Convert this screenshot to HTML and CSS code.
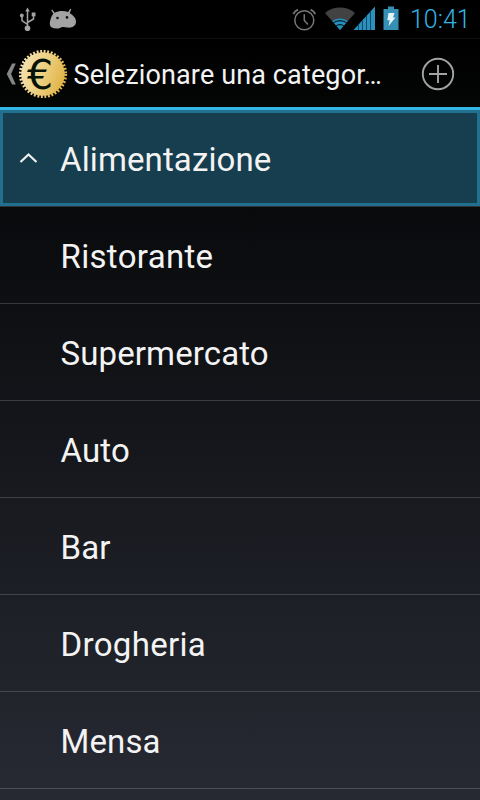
FILE: index.html
```html
<!DOCTYPE html>
<html lang="it">
<head>
<meta charset="utf-8">
<title>Selezionare una categoria</title>
<link rel="stylesheet" href="styles.css">
</head>
<body>
<div class="screen">
  <header class="status">
    <svg class="status-left" width="80" height="38" viewBox="0 0 80 38">
      <g fill="none" stroke="#a3a3a3" stroke-width="1.5">
        <path d="M27.5 10v18M27.5 24.5l-5.5-4v-4M27.5 22.500l6-3.500v-3"/>
      </g>
      <g fill="#a3a3a3">
        <path d="M27.500 7.500l2.300 4h-4.600z"/>
        <circle cx="27.500" cy="28.200" r="2.800"/>
        <circle cx="21.800" cy="15.500" r="1.900"/>
        <path d="M31.700 12.500h3.800v3.800h-3.800z"/>
        <path d="M52.200 9.500l2.500 3.200c4-2.200 9.500-2.200 13.500-.6l2-3.300 1 .5-1.500 4c3.800 2 6.300 5 6.300 8.200 0 4.500-4 6.800-8.500 6.100-2.500-.5-4.700-1.200-6.500-.2-3.200 1.600-6.500 1.500-9 .1-2.700-1.500-2.400-4.500-1.700-7.300.6-2.600 1.500-4.800 3.100-6.500l-2.200-3.600z"/>
      </g>
      <g fill="#111"><circle cx="57.500" cy="18" r="1.300"/><circle cx="67" cy="17.400" r="1.300"/></g>
    </svg>
    <svg class="status-right" width="122" height="38" viewBox="280 0 122 38">
      <g fill="none" stroke="#777" stroke-width="1.500">
        <circle cx="304.300" cy="20.200" r="9.500"/>
        <path d="M304.300 14.200v6.300l3.700 4"/>
        <path d="M293.300 14.200c1-2.200 2.500-3.700 4.700-4.600M315.300 14.200c-1-2.200-2.500-3.700-4.700-4.600" stroke-width="1.800"/>
      </g>
      <path d="M340 30L325 13c8.500-7.300 21.500-7.300 30 0z" fill="#424242"/>
      <path d="M340 30l-7.800-9c4.500-3.500 11.100-3.500 15.600 0z" fill="#258fbd"/>
      <g fill="none" stroke="#000" stroke-width="1"><path d="M333 23.200c4-3.200 10-3.200 14 0M335.500 26.200c2.600-2 6.400-2 9 0"/></g>
      <path d="M353.500 30L375 6.500V30z" fill="#2b90bd"/>
      <path d="M358.500 30v-5M362.500 30V20.500M366.500 30V16M370.500 30V12" stroke="#0d4c69" stroke-width="1"/>
      <path d="M383.500 9h4.500V6.500h6V9h4.500v21h-15z" fill="#368fb4"/>
      <path d="M388.500 13h6l-1.500 4.500h2.500L388.500 26l1.200-5.800h-2.400z" fill="#e4f3f8"/>
    </svg>
    <time class="clock">10:41</time>
  </header>
  <div class="bar">
    <svg class="home" width="68" height="69" viewBox="0 38 68 69">
      <defs><linearGradient id="gold" x1="20" y1="66" x2="66" y2="82" gradientUnits="userSpaceOnUse"><stop offset="0" stop-color="#f4e2b2"/><stop offset=".5" stop-color="#eccf80"/><stop offset="1" stop-color="#dfb03f"/></linearGradient></defs>
      <path d="M15.800 62.500h-3.700L6.700 73l5.400 10.600h3.700L11.100 73z" fill="#858585"/>
      <circle cx="43" cy="73" r="21.800" fill="url(#gold)"/>
      <circle cx="43" cy="73" r="22.600" fill="none" stroke="url(#gold)" stroke-width="3" stroke-dasharray="1.900 1.650"/>
      <text class="euro" x="27" y="88">€</text>
    </svg>
    <h1 class="title">Selezionare una categor…</h1>
    <svg class="add" width="36" height="36" viewBox="0 0 36 36" fill="none" stroke="#a3a3a3">
      <circle cx="18" cy="18" r="15.200" stroke-width="1.900"/>
      <path d="M18 9v18M9 18h18" stroke-width="1.900"/>
    </svg>
  </div>
  <ul class="list">
    <li class="row selected">
      <svg class="chevron" width="20" height="12" viewBox="0 0 20 12"><path d="M1.500 10l8-7.500L17.500 10" fill="none" stroke="#f0f0f0" stroke-width="2.200"/></svg>
      <span>Alimentazione</span>
    </li>
    <li class="row wide"><span>Ristorante</span></li>
    <li class="row"><span>Supermercato</span></li>
    <li class="row"><span>Auto</span></li>
    <li class="row"><span>Bar</span></li>
    <li class="row wide"><span>Drogheria</span></li>
    <li class="row"><span>Mensa</span></li>
  </ul>
</div>
</body>
</html>
```

FILE: styles.css
```css
* { box-sizing: border-box; margin: 0; padding: 0; }
body { background: #000; color: #f3f3f3; font-family: Roboto, sans-serif; }
.screen {
  width: 480px;
  height: 800px;
  overflow: hidden;
  background: linear-gradient(#000 0, #000 38px, #020303 100px, #090a0c 206px, #272a33 800px);
}
svg { display: block; flex: none; }
.status { height: 38px; display: flex; background: #000; }
.status-right { margin-left: 200px; }
.clock { margin-left: 8px; font-size: 25px; line-height: 39px; color: #33b5e5; font-weight: 300; }
.bar { height: 72px; display: flex; border-top: 1px solid #101010; border-bottom: 3px solid #33b5e5; background: linear-gradient(#000, #040505); }
.euro { font: 41px "DejaVu Sans", sans-serif; fill: #071307; }
.title { width: 330px; padding-left: 5.5px; font-size: 27px; font-weight: 400; line-height: 73px; letter-spacing: .13px; white-space: nowrap; }
.add { margin: 17px 0 0 22px; }
.list { list-style: none; }
.row { height: 97px; display: flex; align-items: center; padding-left: 60.5px; border-bottom: 1px solid rgba(255, 255, 255, .17); font-size: 33px; letter-spacing: .12px; white-space: nowrap; }
.row span { padding-top: 2px; }
.wide { letter-spacing: .32px; }
.selected { padding-left: 19px; background: #173e4e; background-clip: padding-box; box-shadow: inset 0 0 0 3px #21708f; }
.chevron { margin-right: 21px; }
```
